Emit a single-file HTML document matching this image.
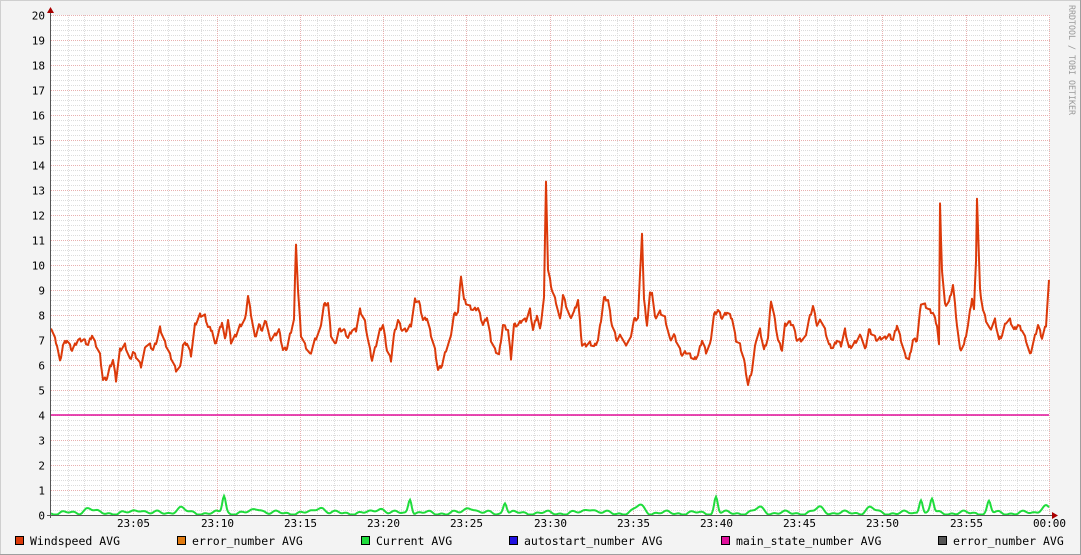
<!DOCTYPE html>
<html><head><meta charset="utf-8"><style>
html,body{margin:0;padding:0;background:#f3f3f3;}
body{width:1081px;height:555px;overflow:hidden;position:relative;}
</style></head><body>
<svg id="s" width="1081" height="555" xmlns="http://www.w3.org/2000/svg" style="position:absolute;left:0;top:0;font-family:'DejaVu Sans Mono','Liberation Mono',monospace;font-size:11px">
<rect x="0" y="0" width="1081" height="555" fill="#f3f3f3"/>
<path d="M0.5 554 V0.5 H1080" stroke="#cfcfcf" fill="none"/>
<path d="M0 554.5 H1080.5 V0" stroke="#9f9f9f" fill="none"/>
<rect x="51" y="15" width="999" height="500" fill="#fff"/>
<g id="grid"></g>
<g id="lab" fill="#000"></g>
<line x1="51" y1="415" x2="1049" y2="415" stroke="#e0109c" stroke-width="1.6"/>
<polyline id="g" fill="none" stroke="#1fdc3c" stroke-width="2"/>
<polyline id="r" fill="none" stroke="#dc3a0a" stroke-width="2" stroke-linejoin="round"/>
<line x1="50.5" y1="10" x2="50.5" y2="518" stroke="#555"/>
<line x1="47" y1="515.5" x2="1053" y2="515.5" stroke="#555"/>
<path d="M47 13 L50.5 7 L54 13Z" fill="#a00"/>
<path d="M1052 512 L1058 515.5 L1052 519Z" fill="#a00"/>
<text transform="translate(1069,5) rotate(90)" fill="#999" font-size="8.4" textLength="110" lengthAdjust="spacingAndGlyphs">RRDTOOL / TOBI OETIKER</text>
<g id="leg"></g>
</svg>
<script>
var NS="http://www.w3.org/2000/svg";
function el(p,t,a,txt){var e=document.createElementNS(NS,t);for(var k in a)e.setAttribute(k,a[k]);if(txt!=null)e.textContent=txt;p.appendChild(e);return e;}
var G=document.getElementById('grid'),L=document.getElementById('lab');
for(var i=0;i<=100;i++){var y=515-i*5+0.5;if(i%5==0)continue;el(G,'line',{x1:51,x2:1050,y1:y,y2:y,stroke:'#dcdcdc','stroke-dasharray':'1,1'});}
var px=999/60;
for(var m=1;m<=60;m++){var x=Math.round(51+m*px)+0.5;if(m%5==0)continue;el(G,'line',{x1:x,x2:x,y1:15,y2:515,stroke:'#dcdcdc','stroke-dasharray':'1,1'});}
for(var m=5;m<=60;m+=5){var x=Math.round(51+m*px)-0.5;el(G,'line',{x1:x,x2:x,y1:15,y2:515,stroke:'#e8b0b0','stroke-dasharray':'1,1'});
var lb=m==60?'00:00':'23:'+(m<10?'0'+m:m);el(L,'text',{x:x,y:527,'text-anchor':'middle'},lb);}
for(var v=0;v<=20;v++){var y=515-v*25+0.5;if(v>0)el(G,'line',{x1:51,x2:1050,y1:y,y2:y,stroke:'#e8b0b0','stroke-dasharray':'1,1'});el(L,'text',{x:45,y:y+4,'text-anchor':'end'},v);}
var R=[51,327,57,345,60,362,63,345,67,340,72,350,78,340,84,340,88,345,92,335,96,345,100,355,103,380,107,378,110,367,113,360,116,380,120,350,125,345,130,360,133,352,137,358,141,366,146,345,150,345,153,350,157,340,160,328,164,340,168,350,172,360,176,370,180,368,183,345,187,343,191,355,195,325,200,315,205,316,208,327,212,330,215,345,218,335,222,322,225,340,228,320,231,342,236,335,240,326,245,320,248,296,252,320,255,338,259,325,262,330,266,320,270,340,275,335,279,330,283,350,287,348,290,335,294,320,295,280,296,243,298,290,301,335,305,345,310,355,315,340,320,330,324,305,328,303,331,335,335,345,339,330,344,330,348,338,352,330,356,330,360,310,365,322,368,340,372,360,376,345,380,330,383,325,387,350,391,360,394,335,398,320,402,330,407,330,411,325,415,300,419,302,423,320,427,318,431,335,435,350,438,370,442,365,446,350,450,340,454,315,458,312,461,275,464,300,468,305,473,310,478,308,483,325,487,317,491,340,495,350,499,355,503,325,508,330,511,358,514,325,518,325,522,320,526,320,530,310,533,330,537,315,540,330,544,298,546,180,548,270,552,290,556,302,560,320,563,295,566,305,570,318,574,312,578,300,582,345,586,345,590,343,594,347,598,340,601,320,604,298,608,300,612,325,617,340,621,335,625,345,630,340,634,320,638,318,642,233,644,300,647,325,650,294,652,292,655,318,660,312,665,318,670,340,674,335,678,345,682,355,686,352,690,355,694,360,698,355,702,340,706,352,710,345,714,315,718,310,722,318,727,312,732,318,736,340,740,345,744,360,748,385,752,370,756,340,760,330,764,350,768,338,771,300,774,315,778,340,782,350,785,325,789,322,793,325,797,340,801,340,805,338,809,320,813,306,817,325,821,320,825,330,829,345,833,348,837,340,841,345,845,330,849,348,853,345,857,340,861,335,865,350,869,330,873,335,877,340,881,338,885,338,889,335,893,340,897,325,901,340,905,355,909,360,913,340,917,340,921,303,925,305,929,310,933,313,937,325,939,345,940,205,942,270,945,305,949,302,953,285,957,325,960,350,964,345,968,325,972,298,974,310,976,260,977,198,980,290,983,310,986,320,990,330,995,320,999,340,1002,335,1006,322,1010,320,1014,330,1018,325,1022,330,1026,340,1030,355,1034,340,1038,325,1042,338,1046,325,1049,280];
var pts=[];for(var i=0;i<R.length-2;i+=2){var x0=R[i],y0=R[i+1],x1=R[i+2],y1=R[i+3];for(var x=x0;x<x1;x++){var t=(x-x0)/(x1-x0);var y=y0+(y1-y0)*t+((x*7919)%5-2)*0.8;pts.push(x+','+y.toFixed(1));}}
pts.push('1049,280');
document.getElementById('r').setAttribute('points',pts.join(' '));
var pk=[[224,0.7],[410,0.6],[505,0.45],[716,0.65],[921,0.6],[932,0.55],[989,0.45],[88,0.2],[258,0.2],[320,0.25],[470,0.25],[590,0.2],[640,0.3],[820,0.2],[1045,0.3],[140,0.15],[180,0.2],[380,0.2],[760,0.2],[870,0.2]];
var gp=[];for(var x=51;x<=1049;x++){var v=0.08+0.06*Math.sin(x*0.21)+0.04*Math.sin(x*0.53);
for(var k=0;k<pk.length;k++){var d=x-pk[k][0];v+=pk[k][1]*Math.exp(-d*d/(pk[k][1]>0.4?6:40));}
if(v<0.02)v=0.02;gp.push(x+','+(515-v*25).toFixed(1));}
document.getElementById('g').setAttribute('points',gp.join(' '));
var LG=document.getElementById('leg');
var items=[[15,'#dc3a0a','Windspeed AVG'],[177,'#e07a10','error_number AVG'],[361,'#1fdc3c','Current AVG'],[509,'#2010e0','autostart_number AVG'],[721,'#e0109c','main_state_number AVG'],[938,'#555555','error_number AVG']];
items.forEach(function(it){el(LG,'rect',{x:it[0]+0.5,y:536.5,width:8,height:8,fill:it[1],stroke:'#000'});el(LG,'text',{x:it[0]+15,y:545,fill:'#000','font-size':'11.5px'},it[2]);});
</script>
</body></html>
